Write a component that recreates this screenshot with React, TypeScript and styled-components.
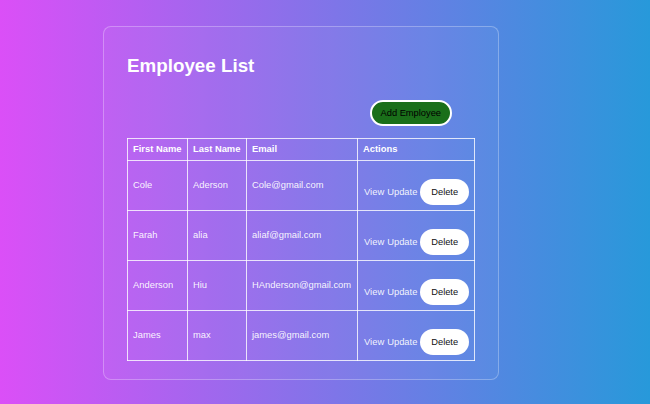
import React from "react";
import styled, { createGlobalStyle } from "styled-components";

const Global = createGlobalStyle`
  html, body { margin: 0; padding: 0; }
  body {
    font-family: "Liberation Sans", Arial, sans-serif;
    background: linear-gradient(90deg, #db4ff7 0%, #2799da 100%);
    min-height: 404px;
  }
`;

const Page = styled.div`
  min-height: 404px;
  display: flex;
  align-items: center;
  padding-left: 103px;
  padding-top: 1px;
  box-sizing: border-box;
`;

const Card = styled.div`
  width: 396px;
  box-sizing: border-box;
  border: 1px solid rgba(255, 255, 255, 0.28);
  border-radius: 8px;
  background: rgba(255, 255, 255, 0.04);
  padding: 28px 23px 18px 23px;
  display: flex;
  flex-direction: column;
`;

const Title = styled.h3`
  margin: 0;
  color: #fff;
  font-size: 18.8px;
  font-weight: 700;
  line-height: 22px;
`;

const Toolbar = styled.div`
  display: flex;
  justify-content: flex-end;
  margin-top: 23px;
  margin-bottom: 12px;
  padding-right: 23px;
`;

const AddButton = styled.button`
  font-family: "Liberation Sans", Arial, sans-serif;
  font-size: 9.3px;
  color: #000;
  background: #1a6f1a;
  border: 2px solid #fff;
  border-radius: 14px;
  height: 26px;
  padding: 0 9px;
  cursor: pointer;
`;

const Table = styled.table`
  border-collapse: collapse;
  width: 347px;
  table-layout: fixed;
  color: #fff;
  font-size: 9.4px;
`;

const Th = styled.th<{ $w: number }>`
  width: ${(p) => p.$w}px;
  border: 1px solid rgba(255, 255, 255, 0.8);
  text-align: left;
  font-weight: 700;
  padding: 0 5px 2px 5px;
  height: 22px;
  box-sizing: border-box;
`;

const Td = styled.td`
  border: 1px solid rgba(255, 255, 255, 0.8);
  padding: 0 5px 2px 5px;
  height: 50px;
  box-sizing: border-box;
  vertical-align: middle;
  white-space: nowrap;
  color: rgba(255, 255, 255, 0.95);
`;

const ActionTd = styled(Td)`
  vertical-align: bottom;
  padding: 0 5px 5px 6px;
`;

const Actions = styled.div`
  display: flex;
  align-items: baseline;
  gap: 3px;
`;

const LinkText = styled.span`
  color: rgba(255, 255, 255, 0.92);
`;

const DeleteButton = styled.button`
  font-family: "Liberation Sans", Arial, sans-serif;
  font-size: 9.3px;
  color: #111;
  background: #fff;
  border: none;
  border-radius: 13px;
  height: 26px;
  width: 49px;
  padding: 0;
  cursor: pointer;
`;

const employees = [
  { first: "Cole", last: "Aderson", email: "Cole@gmail.com" },
  { first: "Farah", last: "alia", email: "aliaf@gmail.com" },
  { first: "Anderson", last: "Hiu", email: "HAnderson@gmail.com" },
  { first: "James", last: "max", email: "james@gmail.com" },
];

export default function App() {
  return (
    <>
      <Global />
      <Page>
        <Card>
          <Title>Employee List</Title>
          <Toolbar>
            <AddButton>Add Employee</AddButton>
          </Toolbar>
          <Table>
            <thead>
              <tr>
                <Th $w={60}>First Name</Th>
                <Th $w={59}>Last Name</Th>
                <Th $w={111}>Email</Th>
                <Th $w={117}>Actions</Th>
              </tr>
            </thead>
            <tbody>
              {employees.map((e) => (
                <tr key={e.email}>
                  <Td>{e.first}</Td>
                  <Td>{e.last}</Td>
                  <Td>{e.email}</Td>
                  <ActionTd>
                    <Actions>
                      <LinkText>View</LinkText>
                      <LinkText>Update</LinkText>
                      <DeleteButton>Delete</DeleteButton>
                    </Actions>
                  </ActionTd>
                </tr>
              ))}
            </tbody>
          </Table>
        </Card>
      </Page>
    </>
  );
}
